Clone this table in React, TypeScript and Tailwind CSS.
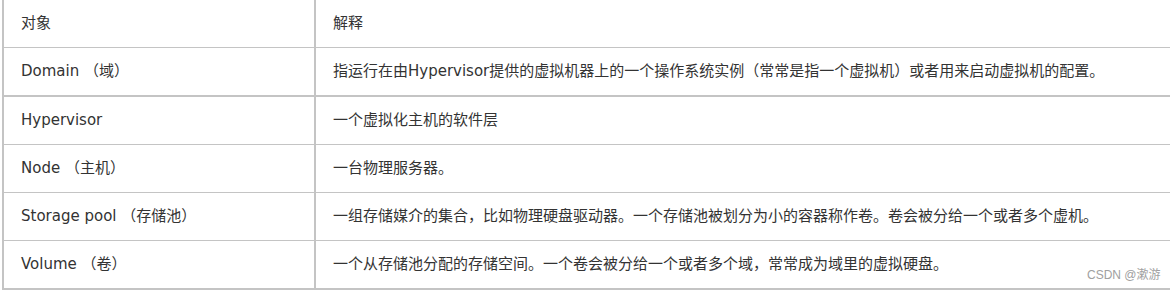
const rows: { name: string; desc: string; thick?: boolean }[] = [
  { name: '对象', desc: '解释' },
  {
    name: 'Domain （域）',
    desc: '指运行在由Hypervisor提供的虚拟机器上的一个操作系统实例（常常是指一个虚拟机）或者用来启动虚拟机的配置。',
    thick: true,
  },
  { name: 'Hypervisor', desc: '一个虚拟化主机的软件层' },
  { name: 'Node （主机）', desc: '一台物理服务器。' },
  {
    name: 'Storage pool （存储池）',
    desc: '一组存储媒介的集合，比如物理硬盘驱动器。一个存储池被划分为小的容器称作卷。卷会被分给一个或者多个虚机。',
  },
  { name: 'Volume （卷）', desc: '一个从存储池分配的存储空间。一个卷会被分给一个或者多个域，常常成为域里的虚拟硬盘。', thick: true },
];

const App = () => {
  return (
    <div
      className="relative h-[290px] w-[1170px] overflow-hidden bg-white text-[15px] text-[#333]"
      style={{ fontFamily: '"DejaVu Sans", "Noto Sans CJK SC", sans-serif' }}>
      <div className="ml-[2px] border-l-2 border-[#c4c4c4]">
        {rows.map((row) => (
          <div
            key={row.name}
            className={`grid h-[48px] grid-cols-[312px_1fr] border-[#c4c4c4] ${row.thick ? 'h-[49px] border-b-2' : 'border-b'}`}>
            <div className="flex items-center border-r-2 border-[#c4c4c4] pl-[17px] whitespace-nowrap">{row.name}</div>
            <div className="flex items-center pl-[17px] whitespace-nowrap">{row.desc}</div>
          </div>
        ))}
      </div>
      <span
        className="absolute left-[1087px] top-[266px] text-[12px] leading-[18px] text-[#a0a0a0]"
        style={{ fontFamily: '"Liberation Sans", "Noto Sans CJK SC", sans-serif' }}>
        CSDN @漱游
      </span>
    </div>
  );
};

export default App;
